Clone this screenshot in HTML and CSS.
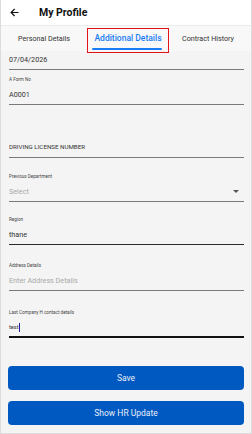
FILE: index.html
```html
<!DOCTYPE html>
<html lang="en">
<head>
  <meta charset="UTF-8">
  <meta name="viewport" content="width=device-width, initial-scale=1.0">
  <title>My Profile</title>
  <link rel="stylesheet" href="styles.css">
</head>
<body>
  <div class="app">
    <div class="header">
      <svg class="back" width="9" height="9" viewBox="0 0 9 9">
        <path d="M8.5 4.5H1.2M4.6 1L1.1 4.5L4.6 8" fill="none" stroke="#111" stroke-width="1.2"/>
      </svg>
      <span class="title">My Profile</span>
    </div>

    <div class="tabs">
      <div class="tab">Personal Details</div>
      <div class="tab active">Additional Details</div>
      <div class="tab">Contract History</div>
    </div>

    <div class="form">
      <div class="field date">
        <div class="value">07/04/2026</div>
      </div>
      <div class="field form-no">
        <div class="label">A Form No</div>
        <div class="value">A0001</div>
      </div>
      <div class="field license">
        <div class="label"></div>
        <div class="value caps">DRIVING LICENSE NUMBER</div>
      </div>
      <div class="field department">
        <div class="label">Previous Department</div>
        <div class="value placeholder select">Select <span class="caret"></span></div>
      </div>
      <div class="field region">
        <div class="label">Region</div>
        <div class="value">thane</div>
      </div>
      <div class="field address">
        <div class="label">Address Details</div>
        <div class="value placeholder">Enter Address Details</div>
      </div>
      <div class="field contact">
        <div class="label">Last Company H contact details</div>
        <div class="value small">test<span class="cursor"></span></div>
      </div>
    </div>

    <div class="actions">
      <button class="btn">Save</button>
      <button class="btn">Show HR Update</button>
    </div>
  </div>
</body>
</html>
```

FILE: styles.css
```css
:root {
  --bg: #f4f4f4;
  --tab-bg: #f8f8f8;
  --blue: #1a7cf5;
  --btn: #0059c1;
  --line: #7a7a7a;
  --text: #333;
}

* {
  box-sizing: border-box;
}

body {
  margin: 0;
  font-family: Roboto, "Noto Sans", sans-serif;
  color: var(--text);
}

.app {
  width: 252px;
  height: 434px;
  background: var(--bg);
  border: 1px solid #dcdcdc;
  border-top: none;
  display: flex;
  flex-direction: column;
  overflow: hidden;
}

.header {
  height: 26px;
  flex-shrink: 0;
  background: #fff;
  display: flex;
  align-items: center;
  padding-left: 9px;
  padding-bottom: 1px;
  border-bottom: 1px solid #ececec;
}

.back {
  margin-right: 20px;
}

.title {
  font-size: 10.5px;
  font-weight: 700;
  color: #111;
}

.tabs {
  height: 25px;
  flex-shrink: 0;
  background: var(--tab-bg);
  display: flex;
  align-items: stretch;
}

.tab {
  font-size: 7.2px;
  color: #333;
  display: flex;
  align-items: center;
  justify-content: center;
  padding-bottom: 1px;
}

.tab:first-child {
  width: 86px;
}

.tab.active {
  width: 82px;
  color: var(--blue);
  font-size: 8.5px;
  font-weight: 500;
  position: relative;
}

.tab.active::before {
  content: "";
  position: absolute;
  left: 0;
  right: 0;
  top: 2px;
  bottom: -2px;
  border: 1px solid #e0141a;
  z-index: 1;
}

.tab.active::after {
  content: "";
  position: absolute;
  left: 5px;
  right: 7px;
  bottom: 1px;
  height: 2px;
  background: var(--blue);
  border-radius: 1px;
}

.tab:last-child {
  flex: 1;
  padding-right: 4px;
}

.form {
  padding: 0 7px 0 8px;
  display: flex;
  flex-direction: column;
}

.field {
  border-bottom: 1px solid var(--line);
}

.field.date .value {
  height: 18px;
  line-height: 17px;
}

.field.form-no {
  margin-top: 5px;
}

.field.license {
  margin-top: 23px;
}

.field.department {
  margin-top: 14px;
}

.field.region {
  margin-top: 13px;
  border-bottom-color: #2a2a2a;
}

.field.address {
  margin-top: 16px;
}

.field.contact {
  margin-top: 17px;
  border-bottom: 2px solid #111;
}

.label {
  font-size: 4.6px;
  color: #444;
  height: 10px;
  line-height: 10px;
}

.value {
  font-size: 7.2px;
  height: 19px;
  line-height: 19px;
  color: #333;
}

.value.caps {
  font-size: 6.2px;
}

.value.small {
  font-size: 5.6px;
  display: flex;
  align-items: center;
  height: 18px;
  line-height: normal;
}

.placeholder {
  color: #a8a8a8;
}

.select {
  display: flex;
  justify-content: space-between;
  align-items: center;
  padding-right: 5px;
  line-height: normal;
}

.caret {
  width: 0;
  height: 0;
  border-left: 3.5px solid transparent;
  border-right: 3.5px solid transparent;
  border-top: 3.5px solid #555;
}

.cursor {
  display: inline-block;
  width: 1px;
  height: 9px;
  background: #2a1aa0;
  margin-left: 0.5px;
}

.actions {
  margin-top: auto;
  padding: 0 7px 8px 7px;
  display: flex;
  flex-direction: column;
  gap: 11px;
}

.btn {
  height: 24px;
  border: none;
  border-radius: 4px;
  background: var(--btn);
  color: #e8eefa;
  font-family: Roboto, "Noto Sans", sans-serif;
  font-size: 8.5px;
  font-weight: 400;
}
```
